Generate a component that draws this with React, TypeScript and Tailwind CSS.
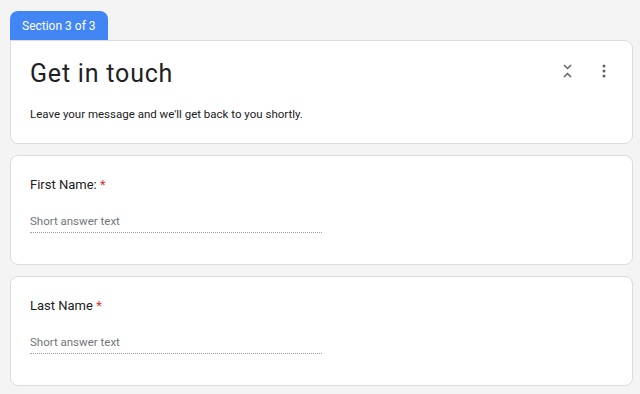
import React from "react";

function CollapseIcon() {
  return (
    <svg width="9" height="14" viewBox="0 0 9 14" fill="none">
      <path d="M1 1L4.5 4.5L8 1" stroke="#5f6368" strokeWidth="1.5" />
      <path d="M1 13L4.5 9.5L8 13" stroke="#5f6368" strokeWidth="1.5" />
    </svg>
  );
}

function MoreIcon() {
  return (
    <svg width="4" height="14" viewBox="0 0 4 14" fill="#5f6368">
      <circle cx="2" cy="2" r="1.5" />
      <circle cx="2" cy="7" r="1.5" />
      <circle cx="2" cy="12" r="1.5" />
    </svg>
  );
}

function Question({ label }: { label: string }) {
  return (
    <div className="h-[110px] rounded-lg border border-[#dadce0] bg-white px-[19px] pt-[19px]">
      <div className="text-[13px] text-[#202124]">
        {label} <span className="text-[#d93025]">*</span>
      </div>
      <div className="mt-[18px] w-[292px] border-b border-dotted border-[#9aa0a6] pb-[2px] text-[11.5px] text-[#70757a]">
        Short answer text
      </div>
    </div>
  );
}

export default function App() {
  return (
    <div
      className="min-h-screen bg-[#f4f4f4] pt-[11px] pl-[10px] pr-[7px]"
      style={{ fontFamily: "Roboto, 'Noto Sans', sans-serif" }}
    >
      <div className="flex">
        <div className="flex h-[29px] items-center rounded-t-lg bg-[#4285f4] px-[12px] text-[12px] text-white">
          Section 3 of 3
        </div>
      </div>
      <div className="h-[104px] rounded-b-lg rounded-tr-lg border border-[#dadce0] bg-white pl-[19px] pr-[26px] pt-[16px]">
        <div className="flex items-start justify-between">
          <div className="text-[25px] leading-[34px] tracking-[0.8px] text-[#202124]">Get in touch</div>
          <div className="flex items-center gap-[30px] pt-[7px]">
            <CollapseIcon />
            <MoreIcon />
          </div>
        </div>
        <div className="mt-[15px] text-[11.5px] text-[#202124]">
          Leave your message and we'll get back to you shortly.
        </div>
      </div>
      <div className="mt-[11px] flex flex-col gap-[11px]">
        <Question label="First Name:" />
        <Question label="Last Name" />
      </div>
    </div>
  );
}
